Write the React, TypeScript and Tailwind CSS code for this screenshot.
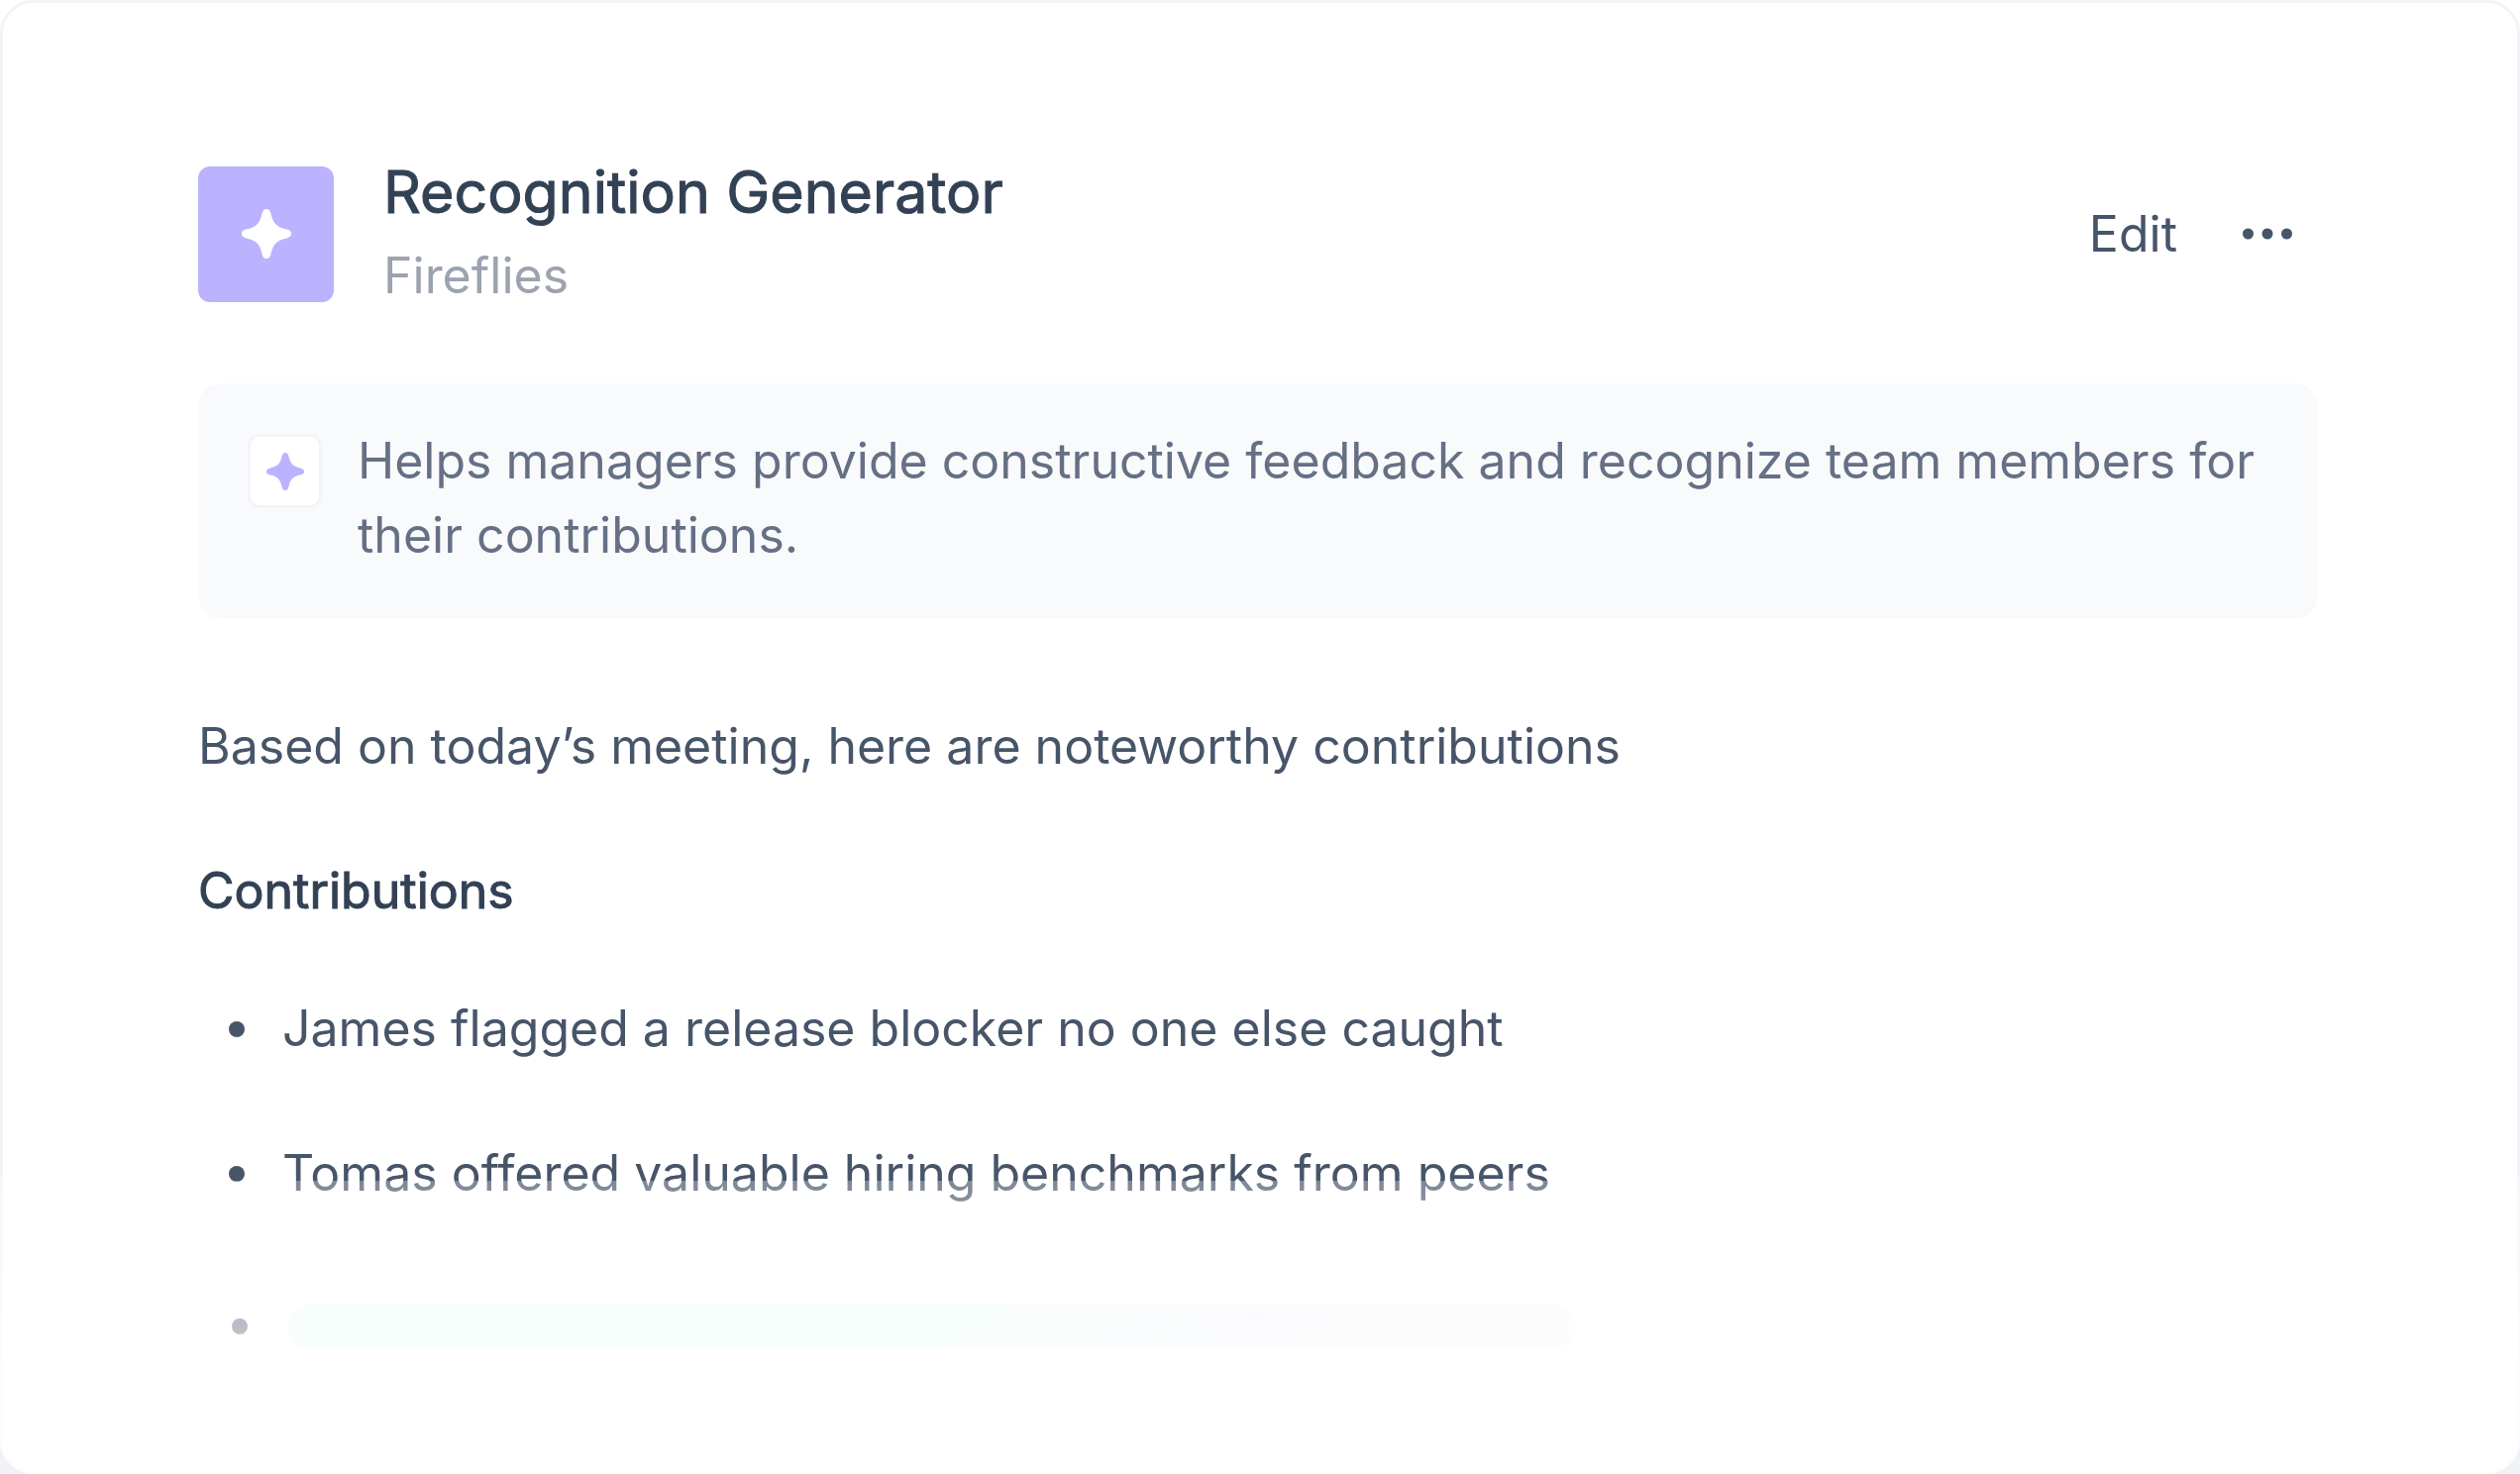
const CONTRIBUTIONS = [
  'James flagged a release blocker no one else caught',
  'Tomas offered valuable hiring benchmarks from peers',
];

function Sparkle({ className }: { className: string }) {
  return (
    <svg className={className} viewBox="0 0 150 150" fill="currentColor" aria-hidden="true">
      <path d="M75 0C82 0 86 4 89 16C95 44 108 56 134 61C146 64 150 68 150 75C150 82 146 86 134 89C108 94 95 106 89 134C86 146 82 150 75 150C68 150 64 146 61 134C55 106 42 94 16 89C4 86 0 82 0 75C0 68 4 64 16 61C42 56 55 44 61 16C64 4 68 0 75 0Z" />
    </svg>
  );
}

function Header() {
  return (
    <header className="flex items-center justify-between pr-[26px]">
      <div className="flex items-center gap-[50px]">
        <div className="flex size-[137px] shrink-0 items-center justify-center rounded-xl bg-[#bbb3ff] text-white">
          <Sparkle className="size-[50px]" />
        </div>
        <div className="flex flex-col gap-[10px]">
          <h1 className="text-[59px] leading-[75px] font-normal text-[#334155] [-webkit-text-stroke:1px_#334155]">
            Recognition Generator
          </h1>
          <p className="text-[50px] leading-[75px] text-[#9ca3af]">Fireflies</p>
        </div>
      </div>

      <div className="flex items-center gap-[66px]">
        <button type="button" className="text-[50px] leading-[75px]">Edit</button>
        <button type="button" aria-label="More options">
          <svg className="h-[12px] w-[50px]" viewBox="0 0 50 12" fill="currentColor">
            <circle cx="5.5" cy="6" r="5.5" />
            <circle cx="25" cy="6" r="5.5" />
            <circle cx="44.5" cy="6" r="5.5" />
          </svg>
        </button>
      </div>
    </header>
  );
}

function Description() {
  return (
    <section className="mt-[71px] flex items-start gap-9 rounded-3xl bg-[#f9fafc] pt-[41px] pr-10 pb-[47px] pl-[50px]">
      <div className="mt-[10px] flex size-[75px] shrink-0 items-center justify-center rounded-xl border-3 border-[#f3f4f8] bg-white text-[#bbb3ff]">
        <Sparkle className="size-[38px]" />
      </div>
      <p className="text-[50px] leading-[75px] text-[#667085]">
        Helps managers provide constructive feedback and recognize team members for their contributions.
      </p>
    </section>
  );
}

export default function App() {
  return (
    <div className="relative min-h-screen bg-linear-to-b from-white from-50% to-[#f1f2f8] to-50% font-['Inter','Liberation_Sans',sans-serif] text-[#475569]">
      <main className="min-h-screen rounded-[34px] border-3 border-[#f3f4f8] bg-white pt-[153px] pr-[201px] pl-[197px]">
        <Header />
        <Description />

        <p className="mt-[91px] text-[50px] leading-[75px]">
          Based on today’s meeting, here are noteworthy contributions
        </p>
        <h2 className="mt-[71px] text-[50px] leading-[75px] font-normal text-[#334155] [-webkit-text-stroke:1px_#334155]">
          Contributions
        </h2>

        <ul className="mt-16 flex flex-col gap-[71px] pl-[31px]">
          {CONTRIBUTIONS.map((text) => (
            <li key={text} className="flex items-center gap-[38px] text-[50px] leading-[75px]">
              <span className="size-4 shrink-0 rounded-full bg-[#475569]" />
              {text}
            </li>
          ))}
          {/* still generating */}
          <li className="flex h-[92px] items-center gap-[41px] pl-[3px]">
            <span className="size-4 shrink-0 rounded-full bg-[#475569]" />
            <span className="h-[44px] w-[1300px] rounded-[20px] bg-linear-to-r from-[#edfff6] from-50% via-[#f5f6fc] via-75% to-[#fafafa]" />
          </li>
        </ul>
      </main>

      {/* fade out */}
      <div className="pointer-events-none absolute inset-x-0 bottom-0 h-[296px] rounded-b-[34px] bg-linear-to-b from-white/30 to-white/95" />
    </div>
  );
}
